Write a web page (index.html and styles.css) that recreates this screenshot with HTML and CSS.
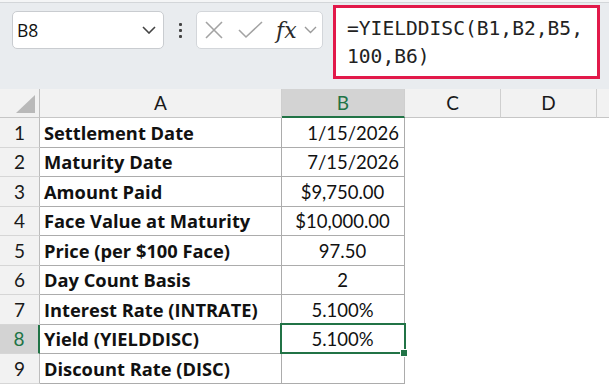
FILE: index.html
```html
<!DOCTYPE html>
<html lang="en">
<head>
    <meta charset="UTF-8">
    <link rel="stylesheet" href="styles.css">
</head>
<body>
    <div class="app">
        <div class="ribbon-edge"></div>
        <div class="formula-bar">
            <div class="name-box">
                <span>B8</span>
                <svg class="chev" width="14" height="8" viewBox="0 0 14 8"><polyline points="1,1 7,7 13,1" fill="none" stroke="#444" stroke-width="1.6"/></svg>
            </div>
            <div class="dots"><i></i><i></i><i></i></div>
            <div class="fx-box">
                <svg width="18" height="18" viewBox="0 0 18 18"><path d="M1 1L17 17M17 1L1 17" stroke="#a3a3a3" stroke-width="1.6" fill="none"/></svg>
                <svg class="check" width="25" height="18" viewBox="0 0 25 18"><polyline points="1,9 8,16 24,1" stroke="#a3a3a3" stroke-width="1.6" fill="none"/></svg>
                <span class="fx">fx</span>
                <svg class="chev-sm" width="13" height="8" viewBox="0 0 13 8"><polyline points="1,1 6.5,6.5 12,1" fill="none" stroke="#9a9a9a" stroke-width="1.4"/></svg>
            </div>
            <div class="formula">=YIELDDISC(B1,B2,B5,<br>100,B6)</div>
        </div>

        <div class="sheet">
            <div class="hd corner"><svg width="19" height="18" viewBox="0 0 19 18"><polygon points="19,0 19,18 0,18" fill="#b9b9b9"/></svg></div>
            <div class="hd">A</div>
            <div class="hd active">B</div>
            <div class="hd">C</div>
            <div class="hd">D</div>
            <div class="hd last"></div>

            <div class="rh">1</div><div class="cell label">Settlement Date</div><div class="cell right">1/15/2026</div><div class="blank"></div><div class="blank"></div><div class="blank"></div>
            <div class="rh">2</div><div class="cell label">Maturity Date</div><div class="cell right">7/15/2026</div><div class="blank"></div><div class="blank"></div><div class="blank"></div>
            <div class="rh">3</div><div class="cell label">Amount Paid</div><div class="cell">$9,750.00</div><div class="blank"></div><div class="blank"></div><div class="blank"></div>
            <div class="rh">4</div><div class="cell label">Face Value at Maturity</div><div class="cell">$10,000.00</div><div class="blank"></div><div class="blank"></div><div class="blank"></div>
            <div class="rh">5</div><div class="cell label">Price (per $100 Face)</div><div class="cell">97.50</div><div class="blank"></div><div class="blank"></div><div class="blank"></div>
            <div class="rh">6</div><div class="cell label">Day Count Basis</div><div class="cell">2</div><div class="blank"></div><div class="blank"></div><div class="blank"></div>
            <div class="rh">7</div><div class="cell label">Interest Rate (INTRATE)</div><div class="cell">5.100%</div><div class="blank"></div><div class="blank"></div><div class="blank"></div>
            <div class="rh active">8</div><div class="cell label">Yield (YIELDDISC)</div><div class="cell selected">5.100%<span class="handle"></span></div><div class="blank"></div><div class="blank"></div><div class="blank"></div>
            <div class="rh">9</div><div class="cell label">Discount Rate (DISC)</div><div class="cell"></div><div class="blank"></div><div class="blank"></div><div class="blank"></div>
        </div>
    </div>
</body>
</html>
```

FILE: styles.css
```css
* {
    margin: 0;
    padding: 0;
    box-sizing: border-box;
}

body {
    width: 609px;
    height: 387px;
    overflow: hidden;
    background: white;
    font-family: Lato, 'Open Sans', sans-serif;
    color: #111;
}

.ribbon-edge {
    height: 3px;
    background: #f4f5f6;
    border-bottom: 1px solid #d3d6d9;
}

.formula-bar {
    height: 86px;
    background: #e9ecef;
    display: flex;
    align-items: flex-start;
    padding-left: 12px;
}

.name-box {
    margin-top: 8px;
    width: 152px;
    height: 38px;
    background: white;
    border: 1px solid #c9ccd0;
    border-radius: 5px;
    display: flex;
    align-items: center;
    justify-content: space-between;
    padding: 0 7px 0 4px;
    font-family: 'Open Sans', sans-serif;
    font-size: 17.5px;
    color: #111;
}

.dots {
    width: 32px;
    margin-top: 20px;
    display: flex;
    flex-direction: column;
    align-items: center;
    gap: 3px;
}

.dots i {
    display: block;
    width: 3px;
    height: 3px;
    background: #444;
    border-radius: 1px;
}

.fx-box {
    margin-top: 8px;
    width: 127px;
    height: 38px;
    background: white;
    border: 1px solid #d3d6da;
    border-radius: 5px;
    display: flex;
    align-items: center;
    padding-left: 8px;
}

.check {
    margin-left: 15px;
}

.fx {
    font-family: 'DejaVu Serif', 'Liberation Serif', serif;
    font-style: italic;
    font-size: 22px;
    color: #2a2a2a;
    margin-left: 13px;
}

.chev-sm {
    margin-left: 7px;
}

.formula {
    margin-top: 2px;
    margin-left: 10px;
    width: 267px;
    height: 74px;
    background: white;
    border: 3px solid #e2194a;
    padding: 7px 0 0 11px;
    font-family: 'DejaVu Sans Mono', 'Liberation Mono', monospace;
    font-size: 19.6px;
    line-height: 28px;
    color: #222;
}

.sheet {
    display: grid;
    grid-template-columns: 40px 242px 123px 96px 96px 12px;
    grid-template-rows: 29px repeat(9, 29.5px);
    font-size: 18.5px;
    line-height: 20px;
}

.hd {
    background: #f2f2f2;
    border-right: 1px solid #cfcfcf;
    border-bottom: 1px solid #c6c6c6;
    display: flex;
    align-items: flex-end;
    justify-content: center;
    padding-bottom: 4px;
    color: #1a1a1a;
    font-size: 19px;
}

.hd.corner {
    border-right-color: #c0c0c0;
    justify-content: flex-end;
    padding: 0 4px 4px 0;
}

.hd.active {
    background: #d3d3d3;
    color: #217346;
    border-bottom: 2px solid #217346;
    padding-bottom: 3px;
}

.hd.last {
    border-right: none;
}

.rh {
    background: #f2f2f2;
    border-right: 1px solid #bdbdbd;
    border-bottom: 1px solid #d6d6d6;
    display: flex;
    align-items: flex-end;
    justify-content: center;
    padding-bottom: 4px;
    color: #1a1a1a;
    font-size: 19px;
}

.rh.active {
    background: #d3d3d3;
    color: #217346;
    border-right: 2px solid #217346;
}

.cell {
    border-right: 1px solid #acacac;
    border-bottom: 1px solid #acacac;
    display: flex;
    align-items: flex-end;
    justify-content: center;
    padding: 0 5px 4px 4px;
    white-space: nowrap;
    position: relative;
}

.cell.label {
    justify-content: flex-start;
    font-family: 'Open Sans', Lato, sans-serif;
    font-weight: 700;
    font-size: 18.3px;
    padding-bottom: 4px;
}

.cell.right {
    justify-content: flex-end;
}

.cell.selected::after {
    content: "";
    position: absolute;
    left: -2px;
    top: -2px;
    right: -2px;
    bottom: -1px;
    border: 2px solid #217346;
}

.handle {
    position: absolute;
    right: -4px;
    bottom: -4px;
    width: 8px;
    height: 8px;
    background: #217346;
    border: 1px solid white;
    z-index: 2;
}

.blank {
    background: white;
}
```
